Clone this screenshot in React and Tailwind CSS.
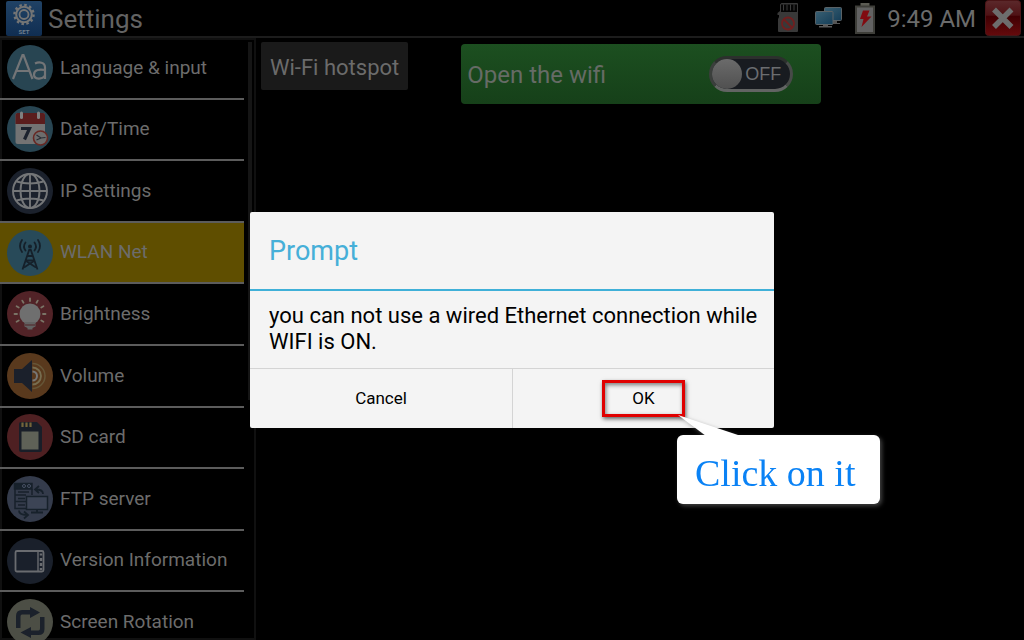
import React from "react";

function LanguageIcon() {
  return (
    <svg viewBox="0 0 46 46" className="block size-full" fill="none" stroke="#737577" strokeWidth="2.200">
      <circle cx="23" cy="23" r="23" fill="#284552" stroke="none" />
      <path d="M6 34 15.500 10h1L25.500 34M9.500 26h13" />
      <path d="M28 18.500c4-2 10-1.500 10 4V34M38 25c-5-1-11-.5-11 4.500s8 5.500 11 1" />
    </svg>
  );
}

function DateIcon() {
  return (
    <svg viewBox="0 0 46 46" className="block size-full">
      <circle cx="23" cy="23" r="23" fill="#284552" />
      <rect x="8.500" y="7" width="29.500" height="31" rx="2" fill="#737373" />
      <path d="M8.500 18V9q0-2 2-2H36q2 0 2 2v9z" fill="#5a1d1d" />
      <rect x="13" y="5.500" width="3" height="7.500" rx="1.500" fill="#808080" />
      <rect x="30" y="5.500" width="3" height="7.500" rx="1.500" fill="#808080" />
      <path d="M14 22.500h8.500L17.500 33.500" fill="none" stroke="#1c222d" strokeWidth="3.200" />
      <circle cx="33.500" cy="32" r="7" fill="#6d6d6d" stroke="#682823" strokeWidth="1.600" />
      <path d="m29.500 29 4.500 3 4.500-.5M34 32l-4.500 2" fill="none" stroke="#282c34" strokeWidth="1.200" />
    </svg>
  );
}

function GlobeIcon() {
  return (
    <svg viewBox="0 0 46 46" className="block size-full" fill="none" stroke="#747678" strokeWidth="1.900">
      <circle cx="23" cy="23" r="23" fill="#1b212c" stroke="none" />
      <circle cx="23" cy="23" r="17" />
      <ellipse cx="23" cy="23" rx="9.500" ry="17" />
      <path d="M23 6v34M6 23h34M9.500 13.500q13.500 4 27 0M9.500 32.500q13.500-4 27 0" />
    </svg>
  );
}

function AntennaIcon() {
  return (
    <svg viewBox="0 0 46 46" className="block size-full" fill="none" stroke="#15202a" strokeWidth="1.800">
      <circle cx="23" cy="23" r="23" fill="#284a59" stroke="none" />
      <circle cx="23" cy="16.500" r="2" fill="#15202a" stroke="none" />
      <path d="m22.500 19-7 20.500M23.500 19l7 20.500M20.500 26h5M19 30.500h8" />
      <path d="m19 31 10 6.500M27 31l-10 6.500" />
      <path d="M18.500 20.500q-3-4 0-8M27.500 20.500q3-4 0-8M15 22q-4-6 0-12M31 22q4-6 0-12" strokeLinecap="round" />
    </svg>
  );
}

const rays = [-120, -90, -60, -30, 0, 30, 60, 90, 120];

function BrightnessIcon() {
  return (
    <svg viewBox="0 0 46 46" className="block size-full">
      <circle cx="23" cy="23" r="23" fill="#512327" />
      <circle cx="23" cy="23" r="10.500" fill="#6f6f6f" />
      <path d="M17.500 31h11v4.500l-3 1.500v1.500h-5V37l-3-1.500z" fill="#626262" />
      <path d="M18 34h10" stroke="#512327" strokeWidth="1" />
      {rays.map((angle) => (
        <path key={angle} d="M23 7.500V10" stroke="#7b7567" strokeWidth="1.800" strokeLinecap="round" transform={`rotate(${angle} 23 23)`} />
      ))}
    </svg>
  );
}

function VolumeIcon() {
  return (
    <svg viewBox="0 0 46 46" className="block size-full" fill="none">
      <circle cx="23" cy="23" r="23" fill="#59391d" />
      <path d="M7 16h8L25 7v32l-10-9H7z" fill="#1b202b" />
      <path d="M25.500 18.500a4.500 4.500 0 0 1 0 9" stroke="#777" strokeWidth="2" />
      <path d="M25.500 14.500a8.500 8.500 0 0 1 0 17" stroke="#776d4f" strokeWidth="1.800" />
      <path d="M25.500 10.500a12.500 12.500 0 0 1 0 25" stroke="#665638" strokeWidth="1.500" />
    </svg>
  );
}

function SdIcon() {
  return (
    <svg viewBox="0 0 46 46" className="block size-full">
      <circle cx="23" cy="23" r="23" fill="#4e2022" />
      <path d="M12 10q0-2 2-2h16l5 5v23q0 2-2 2H14q-2 0-2-2z" fill="#191e28" />
      <rect x="14.500" y="17.500" width="17" height="18" fill="#5f6157" />
      <path d="M15.500 8.500V13M19.500 8.500V13M23.500 8.500V13" stroke="#75653a" strokeWidth="2.200" />
    </svg>
  );
}

function FtpIcon() {
  return (
    <svg viewBox="0 0 46 46" className="block size-full" fill="none" stroke="#17212b" strokeWidth="1.500">
      <circle cx="23" cy="23" r="23" fill="#343b4b" stroke="none" />
      <rect x="7.500" y="7.500" width="17.500" height="5.500" fill="#17212b" />
      <circle cx="17" cy="10" r="1.500" stroke="#485164" strokeWidth="1" />
      <circle cx="22" cy="10" r="1.500" stroke="#485164" strokeWidth="1" />
      <path d="M25 13v6M8 12v20.500h11M8 19h11M8 25.500h11M11 16h11M11 22.500h7M11 29h7" />
      <rect x="19.500" y="20.500" width="21" height="13" fill="#3c4455" />
      <path d="M30 34v2M24 36.500h12" strokeWidth="2" />
      <path d="M36 18q0-4.500-7-4.500M32 10l-4 3.500 4 3.500" strokeWidth="1.800" />
      <path d="M12 34.500q0 4.500 8 4.500M17 35.500l4 3.500-4 3.500" strokeWidth="1.800" />
    </svg>
  );
}

function VersionIcon() {
  return (
    <svg viewBox="0 0 46 46" className="block size-full" fill="none" stroke="#6a6c70" strokeWidth="1.800">
      <circle cx="23" cy="23" r="23" fill="#1a202b" stroke="none" />
      <rect x="8.500" y="13" width="28" height="20.500" rx="1.500" />
      <path d="M31 13v20.500" strokeWidth="1.400" />
      <path d="M34 15.500v2M34 20v3M34 25v3M34 30v2" strokeWidth="2.500" />
    </svg>
  );
}

function RotationIcon() {
  return (
    <svg viewBox="0 0 46 46" className="block size-full">
      <circle cx="23" cy="23" r="23" fill="#4c4e45" />
      <path d="M9 29V17q0-6 6-6h8V8l10 5.500L23 19v-3.500h-8q-1.500 0-1.500 2V29z" fill="#1b212b" />
      <path d="M37.500 18v12q0 6-6 6H24v3l-10.500-5.500L24 28v3.500h7.500q1.500 0 1.500-2V18z" fill="#1b212b" />
    </svg>
  );
}

function SettingsLogo() {
  return (
    <svg viewBox="0 0 36 35" className="block h-[35px] w-9" aria-hidden="true">
      <defs>
        <linearGradient id="logo" x2="0" y2="1">
          <stop stopColor="#204265" />
          <stop offset="1" stopColor="#102e52" />
        </linearGradient>
      </defs>
      <rect width="36" height="35" rx="2" fill="url(#logo)" />
      <circle cx="18" cy="13.500" r="7.800" fill="none" stroke="#747575" strokeWidth="2" />
      <circle cx="18" cy="13.500" r="9.500" fill="none" stroke="#747575" strokeWidth="2.500" strokeDasharray="2.500 2.470" />
      <circle cx="18" cy="13.500" r="4.500" fill="none" stroke="#747575" strokeWidth="1.800" />
      <text x="18" y="32.500" textAnchor="middle" fontSize="6" fontWeight="700" fontFamily="Roboto, sans-serif" fill="#6d7d8c">SET</text>
    </svg>
  );
}

function NoSdIcon() {
  return (
    <svg viewBox="0 0 22 30" className="block h-[30px] w-[22px]" aria-hidden="true">
      <path d="M3 1.500 4.500 0H20q1 0 1 1v27q0 1-1 1H2q-1 0-1-1V16l1-2v-2H.500V10L3 8z" fill="#393939" />
      <path d="M4 1.500h16V9H4z" fill="#050505" />
      <path d="M6.500 1.500v6M10 1.500v6M13.500 1.500v6M17 1.500v6" stroke="#3c3c3c" strokeWidth="1" />
      <circle cx="11" cy="20.500" r="6" fill="none" stroke="#701f1f" strokeWidth="1.800" />
      <path d="m7 16.500 8 8" stroke="#701f1f" strokeWidth="1.800" />
    </svg>
  );
}

function NetworkIcon() {
  return (
    <svg viewBox="0 0 28 22" className="block h-[22px] w-7" aria-hidden="true">
      <defs>
        <linearGradient id="screen" x2="1" y2="1">
          <stop stopColor="#3a6073" />
          <stop offset="1" stopColor="#153e58" />
        </linearGradient>
      </defs>
      <path d="M18 13v3h-3v1h10v-1h-3v-3z" fill="#555" />
      <rect x="9.500" y=".5" width="17" height="13" rx="1" fill="url(#screen)" stroke="#5a6266" />
      <path d="M8 17v2H4v1.500h13V19h-4v-2z" fill="#5a5a5a" />
      <rect x=".5" y="4.500" width="17.500" height="13" rx="1" fill="url(#screen)" stroke="#5a6266" />
    </svg>
  );
}

function BatteryIcon() {
  return (
    <svg viewBox="0 0 20 31" className="block h-[31px] w-5" aria-hidden="true">
      <rect x="5.500" width="9" height="4" fill="#5c5c54" />
      <rect x="1" y="3.500" width="18" height="26.500" fill="#626262" stroke="#3e3e39" strokeWidth="2" />
      <path d="M8 7.500h6.500L12 13.500h4.500L6.500 24l2-8H5z" fill="#810b10" />
    </svg>
  );
}

function CloseIcon() {
  return (
    <svg viewBox="0 0 36 36" className="block size-9" aria-hidden="true">
      <defs>
        <linearGradient id="close" x2="0" y2="1">
          <stop stopColor="#5b292b" />
          <stop offset=".42" stopColor="#4f1215" />
          <stop offset=".45" stopColor="#400003" />
          <stop offset="1" stopColor="#650a0c" />
        </linearGradient>
      </defs>
      <rect x=".5" y=".5" width="35" height="35" rx="3" fill="url(#close)" stroke="#4c1517" />
      <path d="m9 9.500 17.500 17.500M26.500 9.500 9 27" stroke="#6d6d6d" strokeWidth="5.500" />
    </svg>
  );
}

const items = [
  { label: "Language & input", Icon: LanguageIcon },
  { label: "Date/Time", Icon: DateIcon },
  { label: "IP Settings", Icon: GlobeIcon },
  { label: "WLAN Net", Icon: AntennaIcon, active: true },
  { label: "Brightness", Icon: BrightnessIcon },
  { label: "Volume", Icon: VolumeIcon },
  { label: "SD card", Icon: SdIcon },
  { label: "FTP server", Icon: FtpIcon },
  { label: "Version Information", Icon: VersionIcon },
  { label: "Screen Rotation", Icon: RotationIcon },
];

function Header() {
  return (
    <header className="flex shrink-0 items-center border-b-2 border-[#1c1c1c] pr-[3px] pl-[6px]">
      <SettingsLogo />
      <h1 className="ml-[6px] pt-[2px] text-[26px] leading-[34px] text-[#636363]">Settings</h1>
      <div className="ml-auto flex items-center">
        <NoSdIcon />
        <div className="ml-4"><NetworkIcon /></div>
        <div className="ml-3"><BatteryIcon /></div>
        <time className="ml-3 pt-[2px] text-2xl leading-[34px] text-[#6b6b6b]">9:49 AM</time>
        <button type="button" aria-label="Close" className="ml-[9px]"><CloseIcon /></button>
      </div>
    </header>
  );
}

function Sidebar() {
  return (
    <nav className="relative w-64 shrink-0 overflow-hidden">
      <div className="absolute inset-0 border-2 border-[#101010]" />
      <ul className="relative mr-3 grid h-[616px] auto-rows-fr">
        {items.map(({ label, Icon, active }) => (
          <li key={label} className={`border-b-2 border-[#5c5c5c] ${active ? "bg-[#5f4e00]" : ""}`}>
            <a href="#" className="flex h-full items-center gap-[7px] pl-[7px] text-[19px] text-[#6c6c6c]">
              <span className="size-[46px] shrink-0"><Icon /></span>
              {label}
            </a>
          </li>
        ))}
      </ul>
      <div className="absolute top-1 right-1 bottom-60 w-1 bg-[#151515]" />
    </nav>
  );
}

function Content() {
  return (
    <main className="flex flex-1 items-start pt-1 pl-[5px]">
      <button type="button" className="h-12 rounded-xs bg-[#1a1a1a] px-[9px] pt-[3px] text-[22px] text-[#6b6b6b]">Wi-Fi hotspot</button>
      <label className="mt-[2px] ml-[53px] flex h-15 w-90 items-center justify-between rounded bg-linear-to-b from-[#1c4f20] to-[#164019] pr-7 pl-[6px] text-2xl text-[#666b66]">
        <span className="pt-[2px]">Open the wifi</span>
        <span className="flex h-9 w-[84px] items-center rounded-full border-3 border-t-[#2c302d] border-r-[#474a48] border-b-[#626463] border-l-[#3b3f3c] bg-[#181b20]">
          <input type="checkbox" role="switch" className="size-[30px] shrink-0 appearance-none rounded-full bg-linear-to-b from-[#6b6b6b] to-[#505050]" />
          <span className="ml-[3px] font-['Liberation_Sans',sans-serif] text-lg text-[#6b6d70]">OFF</span>
        </span>
      </label>
    </main>
  );
}

function Callout() {
  return (
    <div className="absolute top-[52px] left-[72px] drop-shadow-[2px_2px_2px_rgba(110,110,110,0.6)]">
      <svg viewBox="0 0 64 21" className="absolute -top-5 left-0 h-[21px] w-16" aria-hidden="true">
        <path d="M1 0 64 21H29z" fill="#fff" />
      </svg>
      <p className="rounded-md bg-white pt-4 pr-[25px] pb-[9px] pl-[18px] font-['Liberation_Serif',serif] text-[38px] leading-11 whitespace-nowrap text-[#0a82f5]">Click on it</p>
    </div>
  );
}

function Dialog() {
  return (
    <div className="fixed inset-0 flex items-center justify-center">
      <section role="dialog" aria-modal="true" aria-labelledby="dialog-title" className="w-[524px] rounded-xs bg-[#f4f4f4] text-black">
        <h2 id="dialog-title" className="border-b-2 border-[#3fb0d8] px-[19px] pt-[21px] pb-5 text-[27px] leading-9 text-[#46afd8]">Prompt</h2>
        <p className="pt-3 pr-3 pb-[13px] pl-[19px] text-[22px] leading-[26px]">you can not use a wired Ethernet connection while WIFI is ON.</p>
        <div className="grid grid-cols-2 border-t border-[#d4d4d4] text-[17px]">
          <button type="button" className="h-[59px]">Cancel</button>
          <button type="button" className="flex h-[59px] items-center justify-center border-l border-[#d4d4d4]">
            <span className="relative flex h-[37px] w-[83px] items-center justify-center border-3 border-[#e00000] shadow-[1px_2px_4px_rgba(0,0,0,0.6),inset_1px_2px_4px_rgba(0,0,0,0.5)]">
              OK
              <Callout />
            </span>
          </button>
        </div>
      </section>
    </div>
  );
}

export default function App() {
  return (
    <div className="flex h-screen flex-col overflow-hidden bg-black font-[Roboto,sans-serif]">
      <Header />
      <div className="flex min-h-0 flex-1">
        <Sidebar />
        <Content />
      </div>
      <Dialog />
    </div>
  );
}
